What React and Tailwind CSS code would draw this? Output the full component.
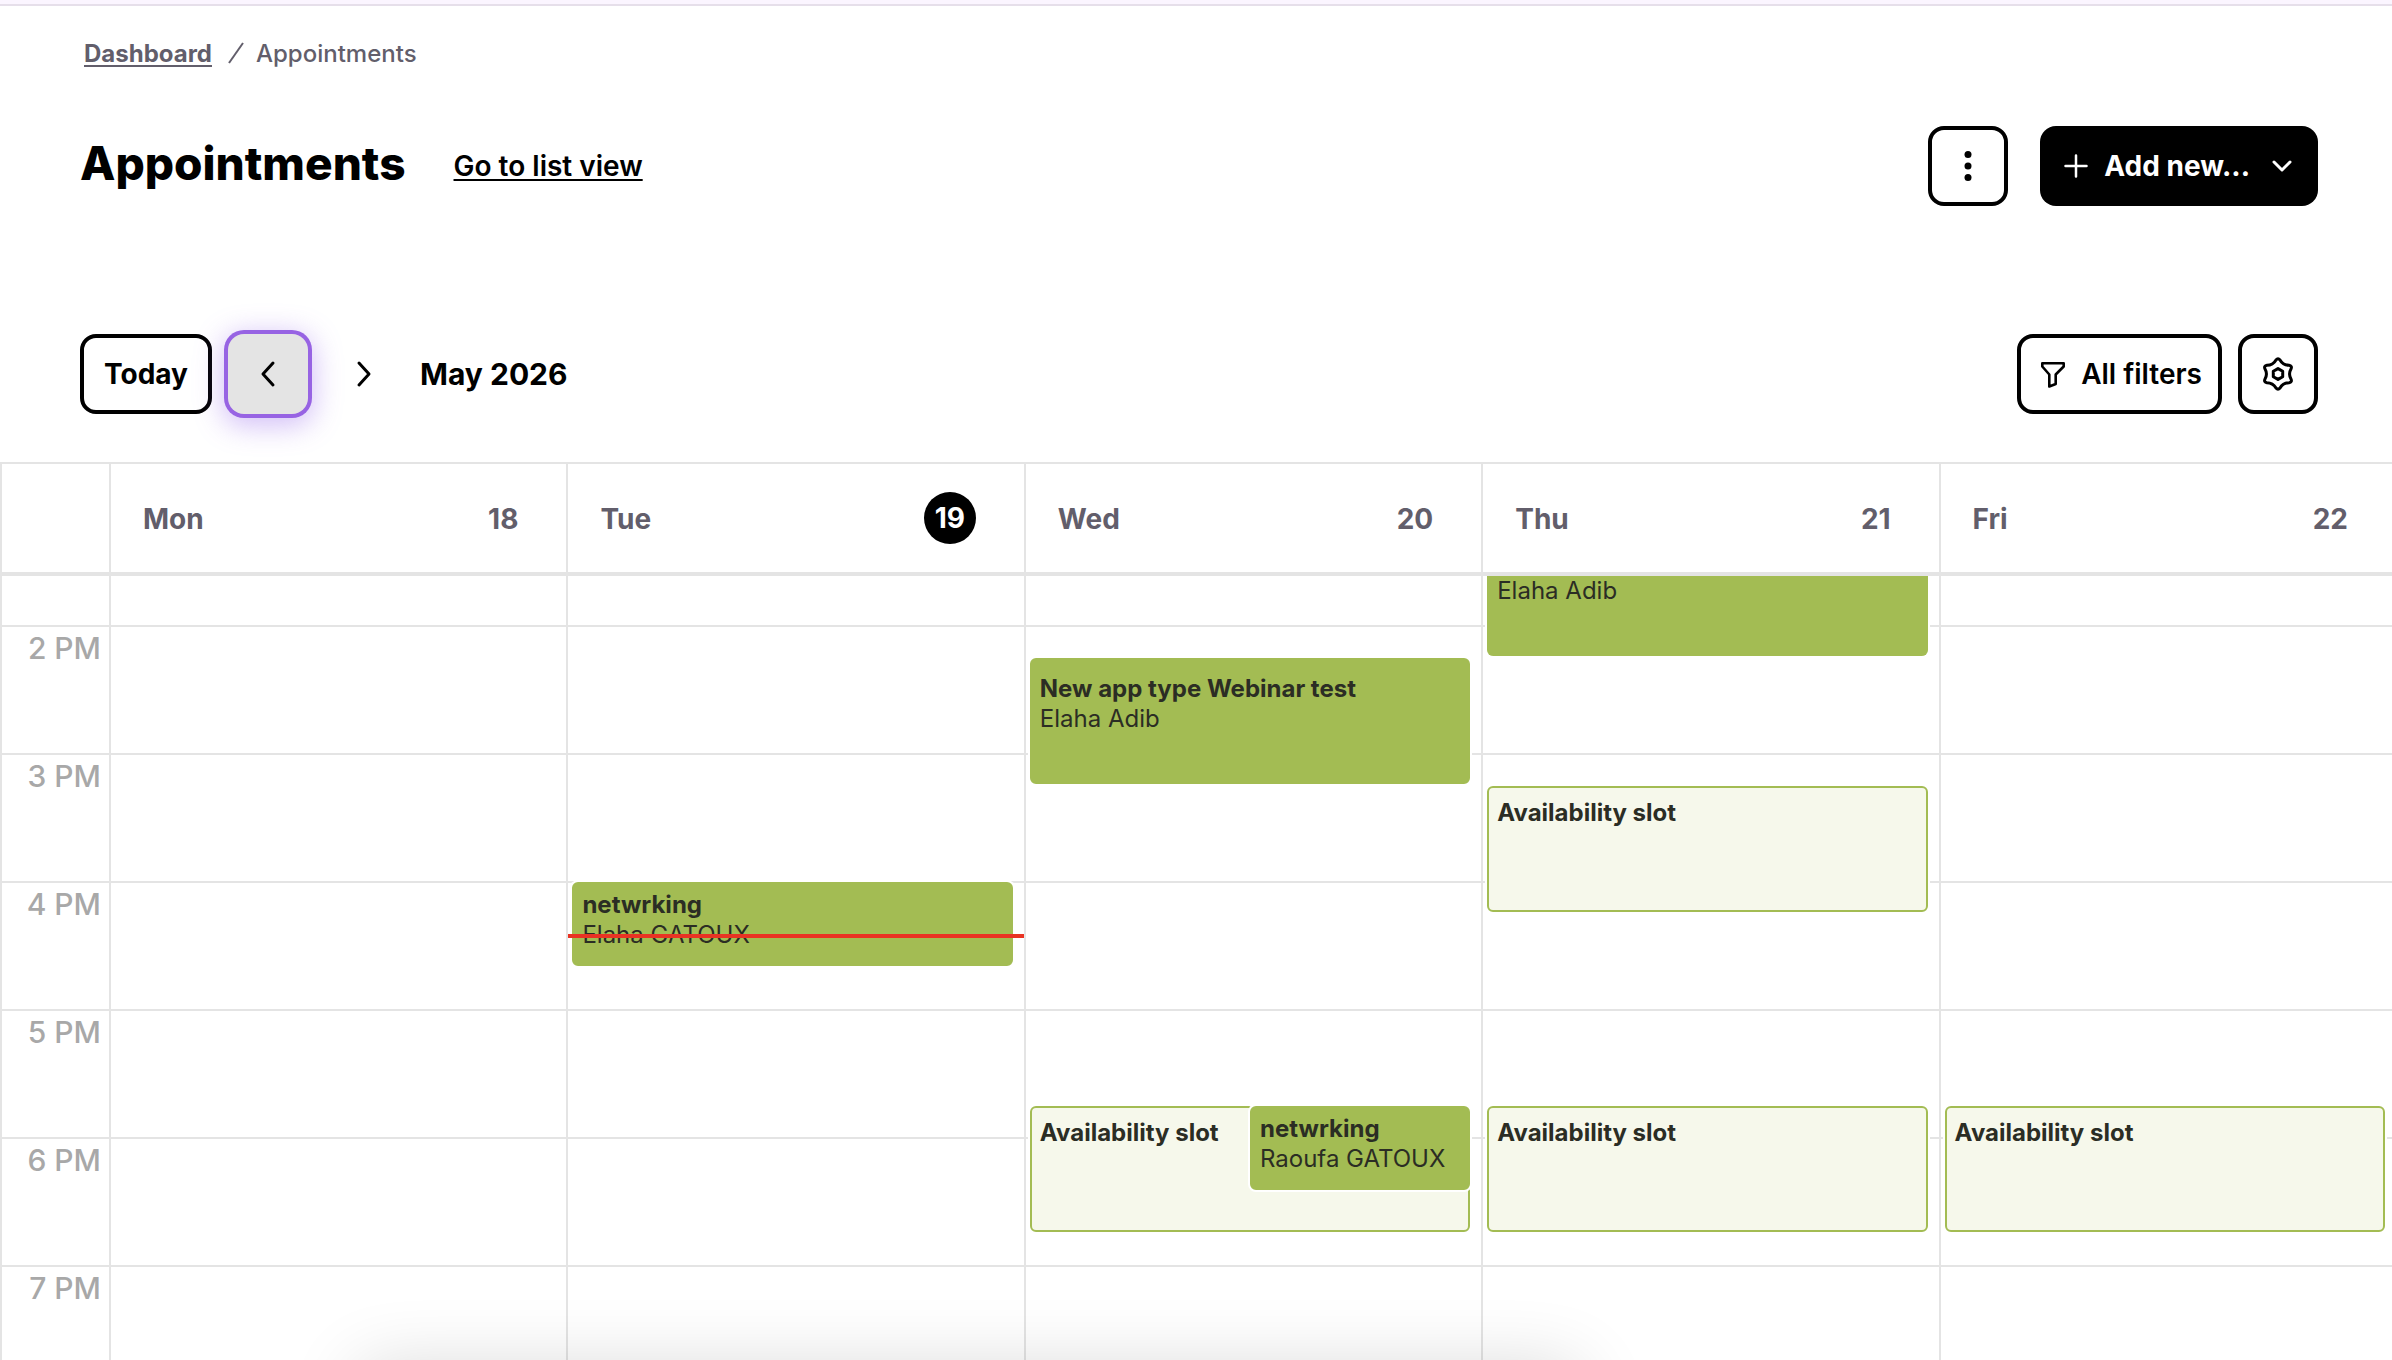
import React from 'react';
import clsx from 'clsx';

const HOUR_HEIGHT = 128;
const FIRST_HOUR = 14;
// part of the 1 PM slot that is still visible under the header
const SCROLL_OFFSET = 49;

const hours = ['2 PM', '3 PM', '4 PM', '5 PM', '6 PM', '7 PM'];

const days = [
  { name: 'Mon', date: 18, events: [] },
  {
    name: 'Tue',
    date: 19,
    today: true,
    now: 16.425,
    events: [{ title: 'netwrking', person: 'Elaha GATOUX', start: 16, minutes: 40 }],
  },
  {
    name: 'Wed',
    date: 20,
    events: [
      { title: 'New app type Webinar test', person: 'Elaha Adib', start: 14.25, minutes: 60, buffer: true },
      { title: 'Availability slot', start: 17.75, minutes: 60, slot: true },
      { title: 'netwrking', person: 'Raoufa GATOUX', start: 17.75, minutes: 40, half: true },
    ],
  },
  {
    name: 'Thu',
    date: 21,
    events: [
      { person: 'Elaha Adib', start: 13.25, minutes: 60, continued: true },
      { title: 'Availability slot', start: 15.25, minutes: 60, slot: true },
      { title: 'Availability slot', start: 17.75, minutes: 60, slot: true },
    ],
  },
  {
    name: 'Fri',
    date: 22,
    events: [{ title: 'Availability slot', start: 17.75, minutes: 60, slot: true }],
  },
];

const hourToY = (hour) => Math.ceil(SCROLL_OFFSET + (hour - FIRST_HOUR) * HOUR_HEIGHT);

const Icon = ({ children, className, width = 3 }) => (
  <svg
    viewBox="0 0 32 32"
    className={clsx('size-8 shrink-0', className)}
    fill="none"
    stroke="currentColor"
    strokeWidth={width}
    strokeLinecap="round"
    strokeLinejoin="round"
    aria-hidden="true"
  >
    {children}
  </svg>
);

const GearIcon = () => (
  <svg
    viewBox="-18 -18 36 36"
    className="size-9"
    fill="none"
    stroke="currentColor"
    strokeWidth="3"
    strokeLinejoin="round"
    aria-hidden="true"
  >
    <path d="M-2 -14Q0 -16.5 2 -14Q5 -8.7 11.1 -8.7Q14.3 -8.2 13.1 -5.3Q10 0 13.1 5.3Q14.3 8.2 11.1 8.7Q5 8.7 2 14Q0 16.5 -2 14Q-5 8.7 -11.1 8.7Q-14.3 8.2 -13.1 5.3Q-10 0 -13.1 -5.3Q-14.3 -8.2 -11.1 -8.7Q-5 -8.7 -2 -14Z" />
    <path d="M0 -5.4L4.7 -2.7V2.7L0 5.4L-4.7 2.7V-2.7Z" />
  </svg>
);

const Event = ({ event }) => {
  const top = event.continued ? 0 : hourToY(event.start) + 1;
  const bottom = hourToY(event.start + event.minutes / 60) - 1;

  return (
    <div
      className={clsx(
        'absolute right-0 overflow-hidden rounded-md border-[#a3bc53] px-2 text-2xl leading-[30px] text-[#2b2d24] ring-2 ring-white',
        event.slot ? 'bg-[#f6f8eb]' : 'bg-[#a3bc53]',
        event.half ? 'left-1/2' : 'left-0',
        event.continued ? 'rounded-t-none border-x-2' : 'border-2',
        event.buffer && 'pt-3.5',
        event.slot && 'pt-2.5',
        !event.buffer && !event.slot && !event.continued && 'pt-1.5'
      )}
      style={{ top, height: bottom - top }}
    >
      {event.title && <p className="font-bold whitespace-nowrap">{event.title}</p>}
      {event.person && <p className="whitespace-nowrap">{event.person}</p>}
    </div>
  );
};

const DayColumn = ({ day }) => (
  <div className="relative border-r-2 border-[#e4e4e4]">
    <div className="h-[49px]" />
    {hours.map((hour) => (
      <div key={hour} className="h-32 border-t-2 border-[#e4e4e4]" />
    ))}
    <div className="absolute inset-y-0 right-[11px] left-1">
      {day.events.map((event) => (
        <Event key={`${event.title}-${event.start}`} event={event} />
      ))}
    </div>
    {day.now && (
      <div className="absolute inset-x-0 h-1 bg-[#e93323]" style={{ top: hourToY(day.now) - 2 }} />
    )}
  </div>
);

const Calendar = () => (
  <section className="-mr-1.5 mt-12 flex min-h-0 flex-1 flex-col overflow-hidden">
    <div className="grid shrink-0 grid-cols-[111px_repeat(5,1fr)] border-t-2 border-b-4 border-[#e4e4e4] text-[28px] leading-9 font-bold text-[#625e6b]">
      <div className="border-x-2 border-[#e4e4e4]" />
      {days.map((day) => (
        <div
          key={day.name}
          className="flex h-[108px] items-center justify-between border-r-2 border-[#e4e4e4] pr-12 pl-8"
        >
          <span className="pt-0.5">{day.name}</span>
          {day.today ? (
            <span className="flex size-13 items-center justify-center rounded-full bg-black text-white">
              {day.date}
            </span>
          ) : (
            <span className="pt-0.5">{day.date}</span>
          )}
        </div>
      ))}
    </div>

    <div className="min-h-0 flex-1 overflow-hidden">
      <div className="grid grid-cols-[111px_repeat(5,1fr)]">
        <div className="border-x-2 border-[#e4e4e4]">
          <div className="h-[49px]" />
          {hours.map((hour) => (
            <div
              key={hour}
              className="h-32 border-t-2 border-[#e4e4e4] pr-2 text-right text-[30px] leading-[42px] font-medium text-[#a8a8a8]"
            >
              {hour}
            </div>
          ))}
        </div>
        {days.map((day) => (
          <DayColumn key={day.name} day={day} />
        ))}
      </div>
    </div>
  </section>
);

const outlineButton =
  'flex h-20 items-center justify-center rounded-2xl border-4 border-black bg-white text-[28px] leading-9';

export default function App() {
  return (
    <div className="relative flex h-screen flex-col overflow-hidden bg-white font-['Inter',sans-serif] text-black">
      <div className="h-1.5 shrink-0 border-b-2 border-[#e6dfea] bg-[#fbf5ff]" />

      <nav className="mt-8 flex items-center gap-3 pl-[84px] text-2xl leading-8 text-[#625e6b]" aria-label="Breadcrumb">
        <a href="#dashboard" className="font-bold underline decoration-2 underline-offset-3">
          Dashboard
        </a>
        <svg viewBox="0 0 20 24" className="h-6 w-5" stroke="currentColor" strokeWidth="2" aria-hidden="true">
          <path d="M5 21L19 1" />
        </svg>
        <span className="font-medium">Appointments</span>
      </nav>

      <header className="mt-14 flex items-center justify-between pr-[74px] pl-20">
        <div className="flex items-center gap-12">
          <h1 className="pb-1.5 text-[46px] leading-14 font-extrabold">Appointments</h1>
          <a href="#list" className="text-[28px] leading-9 font-semibold underline decoration-2 underline-offset-3">
            Go to list view
          </a>
        </div>
        <div className="flex items-center gap-8">
          <button type="button" aria-label="More actions" className={clsx(outlineButton, 'w-20')}>
            <Icon>
              <g fill="currentColor" stroke="none">
                <circle cx="16" cy="4.5" r="3.5" />
                <circle cx="16" cy="16" r="3.5" />
                <circle cx="16" cy="27.5" r="3.5" />
              </g>
            </Icon>
          </button>
          <button
            type="button"
            className="flex h-20 items-center gap-3 rounded-2xl bg-black px-5 text-[28px] leading-9 font-bold text-white"
          >
            <Icon width={2.5}>
              <path d="M16 5.5V26.5M5.5 16H26.5" />
            </Icon>
            Add new...
            <Icon className="ml-1">
              <path d="M8 12L16 20L24 12" />
            </Icon>
          </button>
        </div>
      </header>

      <div className="mt-32 flex items-center justify-between pr-[74px] pl-20">
        <div className="flex items-center gap-4">
          <button type="button" className={clsx(outlineButton, 'px-5 font-bold')}>
            Today
          </button>
          <button
            type="button"
            aria-label="Previous week"
            className="flex size-20 items-center justify-center rounded-2xl bg-[#e4e4e4] shadow-[0_0_0_4px_#9763e3,0_6px_28px_6px_rgba(140,90,235,0.38)]"
          >
            <Icon>
              <path d="M21 5L11 16L21 27" />
            </Icon>
          </button>
          <button type="button" aria-label="Next week" className="flex size-20 items-center justify-center">
            <Icon>
              <path d="M11 5L21 16L11 27" />
            </Icon>
          </button>
          <h2 className="text-[30px] leading-10 font-bold">May 2026</h2>
        </div>
        <div className="flex items-center gap-4">
          <button type="button" className={clsx(outlineButton, 'gap-3 px-4 font-semibold')}>
            <Icon width={2.6}>
              <path d="M5.3 5.3H26.7V8.5L18.7 16.5V26L12.3 28.5V16.5L5.3 8.5Z" />
            </Icon>
            All filters
          </button>
          <button type="button" aria-label="Settings" className={clsx(outlineButton, 'w-20')}>
            <GearIcon />
          </button>
        </div>
      </div>

      <Calendar />

      {/* shadow of the bar docked below the calendar */}
      <div className="absolute right-[34%] -bottom-20 left-[15%] h-18 rounded-xl shadow-[0_0_72px_rgba(0,0,0,0.16)]" />
    </div>
  );
}
